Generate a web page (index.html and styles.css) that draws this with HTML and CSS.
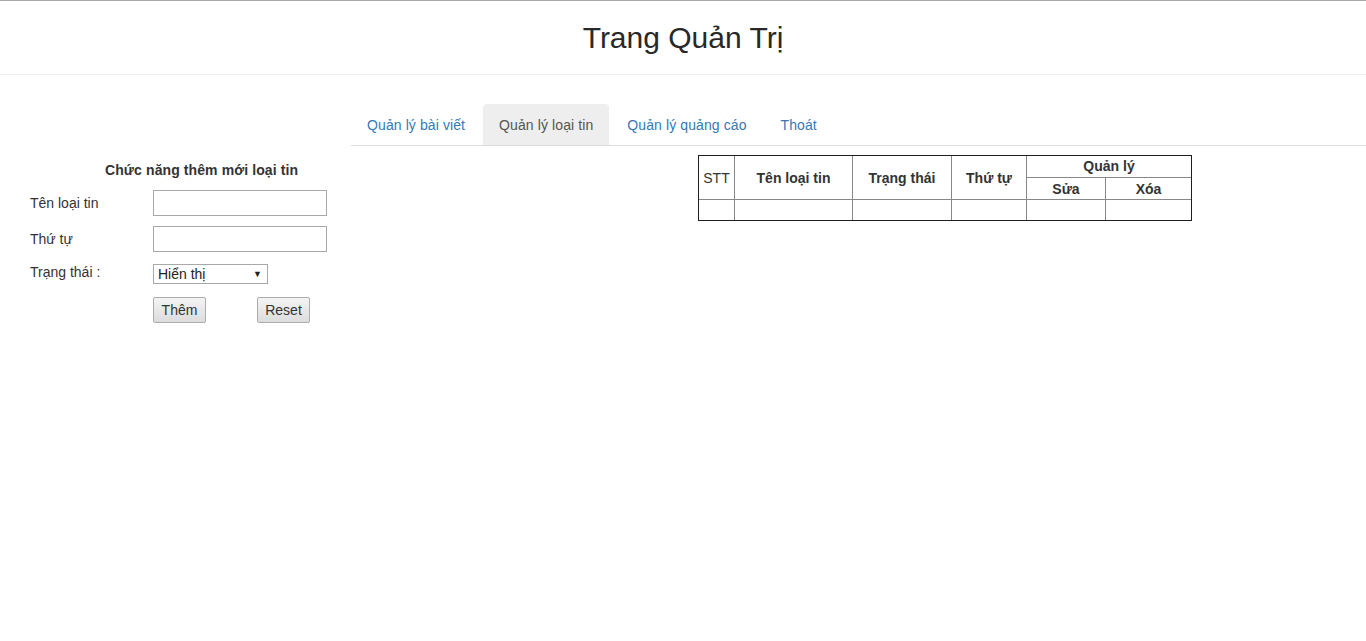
FILE: index.html
```html
<!DOCTYPE html>
<html lang="vi">
<head>
<meta charset="utf-8">
<title>Trang Quản Trị</title>
<link rel="stylesheet" href="styles.css">
</head>
<body>
<header class="header">
  <h1 class="title">Trang Quản Trị</h1>
</header>
<div class="main">
  <aside class="side">
    <h3 class="form-title">Chức năng thêm mới loại tin</h3>
    <form class="form">
      <label class="lbl">Tên loại tin</label>
      <input class="txt" type="text">
      <label class="lbl">Thứ tự</label>
      <input class="txt" type="text">
      <label class="lbl lbl-sel">Trạng thái :</label>
      <div class="sel-wrap">
        <select class="sel"><option>Hiển thị</option><option>Ẩn</option></select>
        <span class="arrow">▼</span>
      </div>
      <span></span>
      <div class="btns">
        <button type="button" class="btn">Thêm</button>
        <button type="reset" class="btn">Reset</button>
      </div>
    </form>
  </aside>
  <section class="content">
    <ul class="tabs">
      <li class="tab"><a href="#">Quản lý bài viết</a></li>
      <li class="tab active"><a href="#">Quản lý loại tin</a></li>
      <li class="tab"><a href="#">Quản lý quảng cáo</a></li>
      <li class="tab"><a href="#">Thoát</a></li>
    </ul>
    <div class="table-wrap">
      <table class="grid">
        <colgroup>
          <col class="c1"><col class="c2"><col class="c3"><col class="c4"><col class="c5"><col class="c6">
        </colgroup>
        <thead>
          <tr>
            <td rowspan="2" class="stt">STT</td>
            <th rowspan="2">Tên loại tin</th>
            <th rowspan="2">Trạng thái</th>
            <th rowspan="2">Thứ tự</th>
            <th colspan="2" class="top">Quản lý</th>
          </tr>
          <tr>
            <th>Sửa</th>
            <th>Xóa</th>
          </tr>
        </thead>
        <tbody>
          <tr class="body-row"><td></td><td></td><td></td><td></td><td></td><td></td></tr>
        </tbody>
      </table>
    </div>
  </section>
</div>
</body>
</html>
```
FILE: styles.css
```css
* { box-sizing: border-box; }
html, body { margin: 0; padding: 0; }
body {
  font-family: "Liberation Sans", Arial, sans-serif;
  font-size: 14px;
  line-height: 20px;
  color: #333;
  background: #fff;
}
.header {
  border-top: 1px solid #a9a9a9;
  border-bottom: 1px solid #eee;
  height: 75px;
  display: flex;
  justify-content: center;
}
.title {
  margin: 19px 0 0;
  font-size: 30px;
  line-height: 36px;
  font-weight: 400;
  color: #282828;
}
.main {
  display: flex;
}
.side {
  width: 351px;
  flex: none;
  padding-top: 85px;
}
.form-title {
  margin: 0 0 10px 105px;
  font-size: 14px;
  line-height: 20px;
  font-weight: 700;
  color: #333;
  letter-spacing: 0.1px;
}
.form {
  display: grid;
  grid-template-columns: 123px 174px;
  padding-left: 30px;
  row-gap: 10px;
  align-items: center;
}
.lbl { line-height: 20px; }
.lbl-sel { margin-top: -2px; }
.txt {
  width: 174px;
  height: 26px;
  border: 1px solid #a9a9a9;
  margin: 0;
  padding: 2px 4px;
  font: inherit;
}
.sel-wrap {
  position: relative;
  width: 115px;
  height: 20px;
  margin-top: 2px;
}
.sel {
  appearance: none;
  -webkit-appearance: none;
  width: 115px;
  height: 20px;
  border: 1px solid #a9a9a9;
  border-radius: 0;
  background: #fff;
  font: inherit;
  font-size: 14px;
  line-height: 18px;
  padding: 0 4px;
  margin: 0;
  color: #222;
}
.arrow {
  position: absolute;
  right: 6px;
  top: 4px;
  font-size: 9px;
  line-height: 12px;
  color: #222;
  pointer-events: none;
}
.btns {
  display: flex;
  gap: 51px;
  margin-top: 3px;
}
.btn {
  width: 53px;
  height: 26px;
  margin: 0;
  padding: 0;
  border: 1px solid #acacac;
  border-radius: 2px;
  background: linear-gradient(#f4f4f4, #dcdcdc);
  font: inherit;
  font-size: 14px;
  color: #333;
}
.content {
  flex: 1;
  padding-top: 29px;
}
.tabs {
  list-style: none;
  margin: 0;
  padding: 0;
  display: flex;
  border-bottom: 1px solid #ddd;
  height: 42px;
}
.tab {
  margin-right: 2px;
  margin-bottom: -1px;
}
.tab a {
  display: block;
  padding: 11px 16px 10px 16px;
  line-height: 20px;
  color: #337ab7;
  text-decoration: none;
  border-radius: 4px 4px 0 0;
  letter-spacing: 0.1px;
}
.tab.active a {
  background: #eee;
  color: #555;
}
.table-wrap {
  padding: 9px 0 0 347px;
}
.grid {
  border-collapse: collapse;
  table-layout: fixed;
  width: 493px;
  outline: 1px solid #1e1e1e;
  outline-offset: -1px;
}
.c1 { width: 36px; }
.c2 { width: 118px; }
.c3 { width: 99px; }
.c4 { width: 75px; }
.c5 { width: 79px; }
.c6 { width: 86px; }
.grid th, .grid td {
  border: 1px solid #888;
  height: 22px;
  padding: 0;
  text-align: center;
  vertical-align: middle;
  line-height: 20px;
}
.grid th.top { line-height: 18px; padding-bottom: 2px; }
.grid .body-row td { height: 21px; }
.grid th { font-weight: 700; }
.grid td.stt { font-weight: 400; }
```
